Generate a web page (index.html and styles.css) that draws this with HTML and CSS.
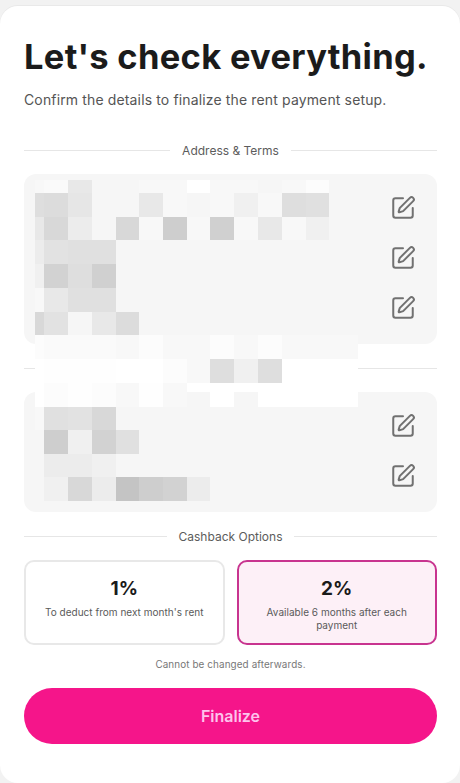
FILE: index.html
```html
<!DOCTYPE html>
<html lang="en">
<head>
<meta charset="utf-8">
<title>Let's check everything.</title>
<link rel="stylesheet" href="styles.css">
</head>
<body>
<svg class="defs" width="0" height="0" aria-hidden="true"><symbol id="edit" viewBox="0 0 24 24"><path d="M12 3H5a2 2 0 0 0-2 2v14a2 2 0 0 0 2 2h14a2 2 0 0 0 2-2v-7"/><path d="M18.375 2.625a1 1 0 0 1 3 3l-9.013 9.014a2 2 0 0 1-.853.505l-2.873.84a.5.5 0 0 1-.62-.62l.84-2.873a2 2 0 0 1 .506-.852z"/></symbol></svg>
<main class="card">
  <h1 class="title">Let's check everything.</h1>
  <p class="subtitle">Confirm the details to finalize the rent payment setup.</p>
  <div class="section-label section-label-first"><span>Address &amp; Terms</span></div>
  <section class="panel panel-three">
    <svg class="icon"><use href="#edit"/></svg>
    <svg class="icon"><use href="#edit"/></svg>
    <svg class="icon"><use href="#edit"/></svg>
  </section>
  <hr class="rule">
  <section class="panel panel-two">
    <svg class="icon"><use href="#edit"/></svg>
    <svg class="icon"><use href="#edit"/></svg>
  </section>
  <div class="section-label section-label-second"><span>Cashback Options</span></div>
  <div class="options">
    <div class="option">
      <strong>1%</strong>
      <span>To deduct from next month's rent</span>
    </div>
    <div class="option option-selected">
      <strong>2%</strong>
      <span>Available 6 months after each payment</span>
    </div>
  </div>
  <p class="note">Cannot be changed afterwards.</p>
  <button class="finalize" type="button">Finalize</button>
</main>
<div class="mosaic" aria-hidden="true">
  <i class="f8"></i><i class="fb"></i><i class="e8"></i><i></i><i></i><i class="f8"></i><i class="f8"></i><i class="ff"></i><i class="f8"></i><i class="f8"></i><i></i><i class="f8"></i><i class="fd"></i><i></i>
  <i class="de"></i><i class="dc"></i><i class="e5"></i><i></i><i></i><i class="e8"></i><i class="f8"></i><i></i><i class="f8"></i><i class="f1"></i><i class="f8"></i><i class="de"></i><i class="e0"></i><i></i>
  <i class="e8"></i><i class="d8"></i><i class="ec"></i><i></i><i class="d8"></i><i class="f8"></i><i class="ce"></i><i class="f8"></i><i class="d0"></i><i class="f8"></i><i class="e8"></i><i class="f8"></i><i class="f1"></i><i></i>
  <i class="ec"></i><i class="e2"></i><i class="e0"></i><i class="e0"></i><i></i><i></i><i></i><i></i><i></i><i></i><i></i><i></i><i></i><i></i>
  <i class="f1"></i><i class="d2"></i><i class="de"></i><i class="d0"></i><i></i><i></i><i></i><i></i><i></i><i></i><i></i><i></i><i></i><i></i>
  <i class="f8"></i><i class="e8"></i><i class="e0"></i><i class="e0"></i><i></i><i></i><i></i><i></i><i></i><i></i><i></i><i></i><i></i><i></i>
  <i class="d8"></i><i class="e2"></i><i></i><i class="e8"></i><i class="dc"></i><i></i><i></i><i></i><i></i><i></i><i></i><i></i><i></i><i></i>
  <i class="fd"></i><i class="fb"></i><i class="fb"></i><i class="fb"></i><i class="f8"></i><i class="fd"></i><i class="f8"></i><i class="f8"></i><i class="fd"></i><i class="f8"></i><i class="fd"></i><i class="f8"></i><i class="f8"></i><i class="f8"></i>
  <i class="ff"></i><i class="fe"></i><i class="fe"></i><i class="fe"></i><i class="ff"></i><i class="ff"></i><i class="fd"></i><i class="f8"></i><i class="de"></i><i class="f1"></i><i class="de"></i><i class="ff"></i><i class="ff"></i><i class="ff"></i>
  <i class="ff"></i><i class="fd"></i><i class="fe"></i><i class="fd"></i><i class="f8"></i><i class="fe"></i><i class="f8"></i><i></i><i class="ff"></i><i></i><i class="ff"></i><i class="ff"></i><i class="ff"></i><i class="ff"></i>
  <i class="f8"></i><i class="e0"></i><i class="e2"></i><i class="d8"></i><i></i><i></i><i></i><i></i><i></i><i></i><i></i><i></i><i></i><i></i>
  <i></i><i class="ce"></i><i class="f1"></i><i class="d2"></i><i class="e0"></i><i></i><i></i><i></i><i></i><i></i><i></i><i></i><i></i><i></i>
  <i></i><i class="ec"></i><i class="ec"></i><i class="f1"></i><i></i><i></i><i></i><i></i><i></i><i></i><i></i><i></i><i></i><i></i>
  <i></i><i class="f1"></i><i class="d8"></i><i class="ec"></i><i class="c4"></i><i class="ce"></i><i class="d2"></i><i class="ec"></i><i></i><i></i><i></i><i></i><i></i><i></i>
</div>
</body>
</html>
```
FILE: styles.css
```css
* { box-sizing: border-box; }
html, body { margin: 0; height: 100%; }
body {
  position: relative;
  height: 783px;
  overflow: hidden;
  padding-top: 6px;
  background: #f2f2f2;
  font-family: Inter, "Liberation Sans", sans-serif;
  color: #1a1a1a;
}
.defs { position: absolute; }
.card {
  height: 777px;
  padding: 28px 23px 0 24px;
  background: #fff;
  border-radius: 18px;
  box-shadow: 0 -1px 0 #e9e9e9;
}
.title {
  margin: 0;
  font-size: 34.5px;
  line-height: 46px;
  font-weight: 700;
  letter-spacing: 0.29px;
  white-space: nowrap;
  color: #1b1b1b;
}
.subtitle {
  margin: 10px 0 0;
  font-size: 14px;
  line-height: 20px;
  letter-spacing: 0.14px;
  color: #555;
}
.section-label {
  display: flex;
  align-items: center;
  gap: 12px;
  height: 16px;
  font-size: 12px;
  color: #5c5c5c;
  white-space: nowrap;
}
.section-label::before,
.section-label::after {
  content: "";
  flex: 1;
  height: 1px;
  background: #e6e6e6;
}
.section-label-first { margin-top: 32px; }
.section-label-second { margin-top: 16px; }
.panel {
  display: flex;
  flex-direction: column;
  align-items: flex-end;
  gap: 24px;
  padding: 21px 21px 0 0;
  background: #f6f6f6;
  border-radius: 12px;
}
.panel-three { height: 170px; margin-top: 16px; }
.panel-two { height: 120px; }
.icon {
  display: block;
  width: 26px;
  height: 26px;
  fill: none;
  stroke: #717171;
  stroke-width: 1.85;
  stroke-linecap: round;
  stroke-linejoin: round;
}
.rule {
  height: 1px;
  margin: 24px 0 23px;
  border: 0;
  background: #e6e6e6;
}
.options {
  display: grid;
  grid-template-columns: 1fr 1fr;
  gap: 12px;
  margin-top: 16px;
}
.option {
  display: flex;
  flex-direction: column;
  align-items: center;
  height: 85px;
  padding: 16px 14px 0;
  border: 2px solid #e8e8e8;
  border-radius: 10px;
  text-align: center;
  font-size: 10px;
  line-height: 13px;
  letter-spacing: 0.02px;
  color: #5a5a5a;
}
.option strong {
  margin-bottom: 6px;
  font-size: 19px;
  line-height: 22px;
  font-weight: 700;
  color: #1a1a1a;
}
.option-selected {
  border-color: #c8348f;
  background: #fdf0f7;
}
.note {
  margin: 13px 0 0;
  text-align: center;
  font-size: 9.9px;
  line-height: 13px;
  letter-spacing: 0.1px;
  color: #777;
}
.finalize {
  display: block;
  width: 100%;
  height: 56px;
  margin-top: 17px;
  border: 0;
  border-radius: 28px;
  background: #f5158a;
  color: #fdc4ec;
  font: 600 16px Inter, "Liberation Sans", sans-serif;
}
.mosaic {
  position: absolute;
  left: 35px;
  top: 180px;
  display: grid;
  grid-template-columns: 9px 24px 24px 24px 23px 24px 24px 23px 24px 24px 24px 24px 23px 29px;
  grid-template-rows: 13px 24px 23px 24px 24px 24px 23px 24px 24px 24px 23px 24px 23px 24px;
}
.mosaic i { display: block; }
.ff { background: #fff; }
.fe { background: #fefefe; }
.fd { background: #fcfcfc; }
.fb { background: #fafafa; }
.f8 { background: #f8f8f8; }
.f1 { background: #f0f0f0; }
.ec { background: #ececec; }
.e8 { background: #e8e8e8; }
.e5 { background: #e6e6e6; }
.e2 { background: #e2e2e2; }
.e0 { background: #e0e0e0; }
.de { background: #dedede; }
.dc { background: #dcdcdc; }
.d8 { background: #d8d8d8; }
.d2 { background: #d2d2d2; }
.d0 { background: #d0d0d0; }
.ce { background: #cecece; }
.c4 { background: #c4c4c4; }
```
